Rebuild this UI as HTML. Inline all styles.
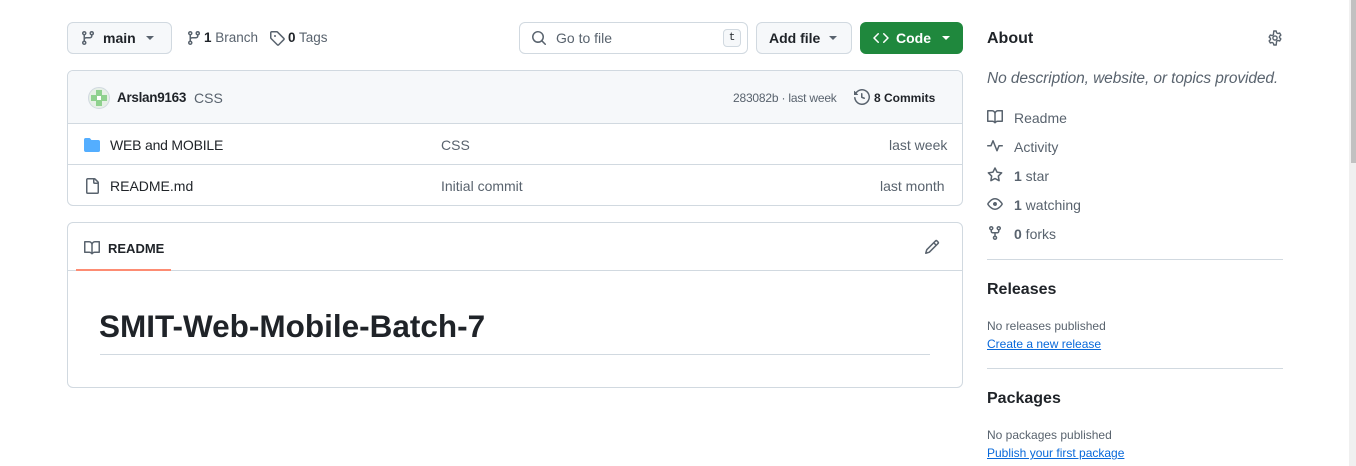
<!DOCTYPE html>
<html><head><meta charset="utf-8"><style>
*{box-sizing:border-box;margin:0;padding:0}
body{width:1356px;height:466px;background:#fff;font-family:"Liberation Sans",sans-serif;color:#1f2328;font-size:14px;position:relative;overflow:hidden}
.a{position:absolute;white-space:nowrap}
.btn{position:absolute;border:1px solid #d1d9e0;border-radius:6px;background:#f6f8fa;height:32px}
svg{display:block}
.g{color:#59636e}
.ic{fill:#59636e}
.lnk{color:#0969da;text-decoration:underline;font-size:12px}
</style></head><body>

<div class="btn" style="left:67px;top:22px;width:105px"></div>
<svg class="a ic" style="left:80px;top:30px" width="16" height="16" viewBox="0 0 16 16"><path d="M9.5 3.25a2.25 2.25 0 1 1 3 2.122V6A2.5 2.5 0 0 1 10 8.5H6a1 1 0 0 0-1 1v1.128a2.251 2.251 0 1 1-1.5 0V5.372a2.25 2.25 0 1 1 1.5 0v1.836A2.49 2.49 0 0 1 6 7h4a1 1 0 0 0 1-1v-.628A2.25 2.25 0 0 1 9.5 3.250Zm-6 0a.75.75 0 1 0 1.5 0 .75.75 0 0 0-1.5 0Zm8.25-.75a.75.75 0 1 0 0 1.5.75.75 0 0 0 0-1.5ZM4.25 12a.75.75 0 1 0 0 1.5.75.75 0 0 0 0-1.5Z"/></svg>
<div class="a" style="left:103px;top:30px;font-weight:bold">main</div>
<div class="a" style="left:146px;top:36px;border:4px solid transparent;border-top:4px solid #59636e"></div>

<svg class="a ic" style="left:186px;top:30px" width="16" height="16" viewBox="0 0 16 16"><path d="M9.5 3.25a2.25 2.25 0 1 1 3 2.122V6A2.5 2.5 0 0 1 10 8.5H6a1 1 0 0 0-1 1v1.128a2.251 2.251 0 1 1-1.5 0V5.372a2.25 2.25 0 1 1 1.5 0v1.836A2.49 2.49 0 0 1 6 7h4a1 1 0 0 0 1-1v-.628A2.25 2.25 0 0 1 9.5 3.250Zm-6 0a.75.75 0 1 0 1.5 0 .75.75 0 0 0-1.5 0Zm8.25-.75a.75.75 0 1 0 0 1.5.75.75 0 0 0 0-1.5ZM4.25 12a.75.75 0 1 0 0 1.5.75.75 0 0 0 0-1.5Z"/></svg>
<div class="a g" style="left:204px;top:30px;font-size:13.5px"><b style="color:#1f2328">1</b> Branch</div>
<svg class="a ic" style="left:269px;top:30px" width="16" height="16" viewBox="0 0 16 16"><path d="M1 7.775V2.750C1 1.784 1.784 1 2.75 1h5.025c.464 0 .91.184 1.238.513l6.25 6.25a1.75 1.75 0 0 1 0 2.474l-5.026 5.026a1.75 1.75 0 0 1-2.474 0l-6.25-6.25A1.752 1.752 0 0 1 1 7.775Zm1.5 0c0 .066.026.13.073.177l6.25 6.25a.25.25 0 0 0 .354 0l5.025-5.025a.25.25 0 0 0 0-.354l-6.25-6.25a.25.25 0 0 0-.177-.073H2.75a.25.25 0 0 0-.25.25ZM6 5a1 1 0 1 1 0 2 1 1 0 0 1 0-2Z"/></svg>
<div class="a g" style="left:288px;top:30px;font-size:13.5px"><b style="color:#1f2328">0</b> Tags</div>

<div class="a" style="left:519px;top:22px;width:229px;height:32px;border:1px solid #d1d9e0;border-radius:6px"></div>
<svg class="a ic" style="left:531px;top:30px" width="16" height="16" viewBox="0 0 16 16"><path d="M10.68 11.74a6 6 0 0 1-7.922-8.982 6 6 0 0 1 8.982 7.922l3.04 3.04a.749.749 0 1 1-1.060 1.06ZM11.5 7a4.499 4.499 0 1 0-8.997 0A4.499 4.499 0 0 0 11.5 7Z"/></svg>
<div class="a g" style="left:556px;top:30px">Go to file</div>
<div class="a" style="left:723px;top:29px;width:18px;height:18px;border:1px solid #d1d9e0;border-radius:4px;background:#f6f8fa;font:11px 'Liberation Mono',monospace;text-align:center;line-height:16px;color:#1f2328">t</div>

<div class="btn" style="left:756px;top:22px;width:96px"></div>
<div class="a" style="left:769px;top:30px;font-weight:bold">Add file</div>
<div class="a" style="left:829px;top:36px;border:4px solid transparent;border-top:4px solid #59636e"></div>

<div class="a" style="left:860px;top:22px;width:103px;height:32px;border-radius:6px;background:#1f883d"></div>
<svg class="a" style="left:873px;top:30px" width="16" height="16" viewBox="0 0 16 16" fill="#fff"><path d="m11.28 3.22 4.25 4.25a.75.75 0 0 1 0 1.06l-4.25 4.25a.749.749 0 0 1-1.06-1.06L13.94 8l-3.72-3.72a.749.749 0 0 1 1.06-1.06Zm-6.56 0a.751.751 0 0 1 1.06 1.06L2.06 8l3.72 3.72a.749.749 0 0 1-1.06 1.06L.47 8.53a.75.75 0 0 1 0-1.06Z"/></svg>
<div class="a" style="left:896px;top:30px;font-weight:bold;color:#fff">Code</div>
<div class="a" style="left:942px;top:36px;border:4px solid transparent;border-top:4px solid #fff"></div>

<div class="a" style="left:67px;top:70px;width:896px;height:136px;border:1px solid #d1d9e0;border-radius:6px;overflow:hidden">
 <div style="height:53px;background:#f6f8fa;border-bottom:1px solid #d1d9e0"></div>
 <div style="height:41px;border-bottom:1px solid #d1d9e0"></div>
</div>
<div class="a" style="left:88px;top:87px;width:22px;height:22px;border-radius:50%;background:#e6f0e6;border:1px solid #d1d9e0;overflow:hidden">
 <div class="a" style="left:7px;top:2px;width:6px;height:16px;background:#8fd18f"></div>
 <div class="a" style="left:2px;top:7px;width:16px;height:6px;background:#8fd18f"></div>
 <div class="a" style="left:8px;top:8px;width:4px;height:4px;background:#fff"></div>
</div>
<div class="a" style="left:117px;top:90px;font-weight:bold;font-size:13.5px;letter-spacing:-0.3px">Arslan9163</div>
<div class="a g" style="left:194px;top:90px">CSS</div>
<div class="a g" style="left:733px;top:91px;font-size:12px;letter-spacing:-0.2px">283082b · last week</div>
<svg class="a ic" style="left:854px;top:89px" width="16" height="16" viewBox="0 0 16 16"><path d="m.427 1.927 1.215 1.215a8.002 8.002 0 1 1-1.6 5.685.75.75 0 1 1 1.493-.154 6.5 6.5 0 1 0 1.18-4.458l1.358 1.358A.25.25 0 0 1 3.896 6H.25A.25.25 0 0 1 0 5.75V2.104a.25.25 0 0 1 .427-.177ZM7.750 4a.75.75 0 0 1 .75.75v2.992l2.028.812a.75.75 0 0 1-.557 1.392l-2.5-1A.751.751 0 0 1 7 8.25v-3.5A.75.75 0 0 1 7.75 4Z"/></svg>
<div class="a" style="left:874px;top:91px;font-size:12px;font-weight:bold">8 Commits</div>

<svg class="a" style="left:84px;top:137px" width="16" height="16" viewBox="0 0 16 16" fill="#54aeff"><path d="M1.75 1A1.75 1.75 0 0 0 0 2.75v10.5C0 14.216.784 15 1.75 15h12.5A1.75 1.75 0 0 0 16 13.25v-8.5A1.75 1.75 0 0 0 14.25 3H7.5a.25.25 0 0 1-.2-.1l-.9-1.2C6.07 1.26 5.55 1 5 1H1.75Z"/></svg>
<div class="a" style="left:110px;top:137px;letter-spacing:-0.2px">WEB and MOBILE</div>
<div class="a g" style="left:441px;top:137px">CSS</div>
<div class="a g" style="left:889px;top:137px">last week</div>

<svg class="a ic" style="left:84px;top:178px" width="16" height="16" viewBox="0 0 16 16"><path d="M2 1.75C2 .784 2.784 0 3.75 0h6.586c.464 0 .909.184 1.237.513l2.914 2.914c.329.328.513.773.513 1.237v9.586A1.75 1.75 0 0 1 13.25 16h-9.5A1.75 1.75 0 0 1 2 14.25Zm1.75-.25a.25.25 0 0 0-.25.25v12.5c0 .138.112.25.25.25h9.5a.25.25 0 0 0 .25-.25V6h-2.75A1.75 1.75 0 0 1 9 4.25V1.5Zm6.75.062V4.25c0 .138.112.25.25.25h2.688l-.011-.013-2.914-2.914-.013-.011Z"/></svg>
<div class="a" style="left:110px;top:178px">README.md</div>
<div class="a g" style="left:441px;top:178px">Initial commit</div>
<div class="a g" style="left:880px;top:178px">last month</div>

<div class="a" style="left:67px;top:222px;width:896px;height:166px;border:1px solid #d1d9e0;border-radius:6px"></div>
<div class="a" style="left:68px;top:270px;width:894px;height:1px;background:#d1d9e0"></div>
<div class="a" style="left:76px;top:269px;width:95px;height:2px;background:#fd8c73"></div>
<svg class="a ic" style="left:84px;top:240px" width="16" height="16" viewBox="0 0 16 16"><path d="M0 1.75A.75.75 0 0 1 .75 1h4.253c1.227 0 2.317.59 3 1.501A3.743 3.743 0 0 1 11.006 1h4.245a.75.75 0 0 1 .75.75v10.5a.75.75 0 0 1-.75.75h-4.507a2.25 2.25 0 0 0-1.591.659l-.622.621a.75.75 0 0 1-1.06 0l-.622-.621A2.25 2.25 0 0 0 5.258 13H.75a.75.75 0 0 1-.75-.75Zm7.251 10.324.004-5.073-.002-2.253A2.25 2.25 0 0 0 5.003 2.5H1.5v9h3.757a3.75 3.75 0 0 1 1.994.574ZM8.755 4.75l-.004 7.322a3.752 3.752 0 0 1 1.992-.572H14.5v-9h-3.495a2.25 2.25 0 0 0-2.25 2.25Z"/></svg>
<div class="a" style="left:108px;top:241px;font-size:13px;font-weight:600">README</div>
<svg class="a ic" style="left:924px;top:239px" width="16" height="16" viewBox="0 0 16 16"><path d="M11.013 1.427a1.75 1.75 0 0 1 2.474 0l1.086 1.086a1.75 1.75 0 0 1 0 2.474l-8.61 8.61c-.21.21-.47.364-.756.445l-3.251.93a.75.75 0 0 1-.927-.928l.929-3.25c.081-.286.235-.547.445-.758l8.61-8.61Zm.176 4.823L9.75 4.81l-6.286 6.287a.253.253 0 0 0-.064.108l-.558 1.953 1.953-.558a.253.253 0 0 0 .108-.064Zm1.238-3.763a.25.25 0 0 0-.354 0L10.811 3.75l1.439 1.44 1.263-1.263a.25.25 0 0 0 0-.354Z"/></svg>
<div class="a" style="left:99px;top:308px;font-size:31.5px;font-weight:600">SMIT-Web-Mobile-Batch-7</div>
<div class="a" style="left:100px;top:354px;width:830px;height:1px;background:#d1d9e0"></div>

<div class="a" style="left:987px;top:30px;font-size:16px;font-weight:bold">About</div>
<svg class="a" style="left:1267px;top:30px" width="16" height="16" viewBox="0 0 16 16" fill="none" stroke="#59636e" stroke-width="1.4" stroke-linejoin="round"><path d="M6.8 1h2.4l.4 1.8 1.3.75 1.75-.55 1.2 2.08-1.35 1.25v1.34l1.35 1.25-1.2 2.08-1.75-.55-1.3.75L9.2 15H6.8l-.4-1.8-1.3-.75-1.75.55-1.2-2.08L3.5 9.67V8.33L2.15 7.08 3.35 5l1.75.55 1.3-.75Z"/><circle cx="8" cy="8" r="2.1"/></svg>
<div class="a g" style="left:987px;top:70px;font-size:15.5px;font-style:italic;letter-spacing:-0.1px">No description, website, or topics provided.</div>

<svg class="a ic" style="left:987px;top:109px" width="16" height="16" viewBox="0 0 16 16"><path d="M0 1.75A.75.75 0 0 1 .75 1h4.253c1.227 0 2.317.59 3 1.501A3.743 3.743 0 0 1 11.006 1h4.245a.75.75 0 0 1 .75.75v10.5a.75.75 0 0 1-.75.75h-4.507a2.25 2.25 0 0 0-1.591.659l-.622.621a.75.75 0 0 1-1.06 0l-.622-.621A2.25 2.25 0 0 0 5.258 13H.75a.75.75 0 0 1-.75-.75Zm7.251 10.324.004-5.073-.002-2.253A2.25 2.25 0 0 0 5.003 2.5H1.5v9h3.757a3.75 3.75 0 0 1 1.994.574ZM8.755 4.75l-.004 7.322a3.752 3.752 0 0 1 1.992-.572H14.5v-9h-3.495a2.25 2.25 0 0 0-2.25 2.25Z"/></svg>
<div class="a g" style="left:1014px;top:110px">Readme</div>
<svg class="a ic" style="left:987px;top:138px" width="16" height="16" viewBox="0 0 16 16"><path d="M6 2c.306 0 .582.187.696.471L10 10.731l1.304-3.26A.751.751 0 0 1 12 7h3.25a.75.75 0 0 1 0 1.5h-2.742l-1.812 4.528a.751.751 0 0 1-1.392 0L6 4.77 4.696 8.03A.75.75 0 0 1 4 8.5H.75a.75.75 0 0 1 0-1.5h2.742l1.812-4.529A.751.751 0 0 1 6 2Z"/></svg>
<div class="a g" style="left:1014px;top:139px">Activity</div>
<svg class="a ic" style="left:987px;top:167px" width="16" height="16" viewBox="0 0 16 16"><path d="M8 .25a.75.75 0 0 1 .673.418l1.882 3.815 4.21.612a.75.75 0 0 1 .416 1.279l-3.046 2.97.719 4.192a.751.751 0 0 1-1.088.791L8 12.347l-3.766 1.98a.75.75 0 0 1-1.088-.79l.72-4.194L.818 6.374a.75.75 0 0 1 .416-1.28l4.21-.611L7.327.668A.75.75 0 0 1 8 .25Zm0 2.445L6.615 5.5a.75.75 0 0 1-.564.41l-3.097.45 2.24 2.184a.75.75 0 0 1 .216.664l-.528 3.084 2.769-1.456a.75.75 0 0 1 .698 0l2.77 1.456-.53-3.084a.75.75 0 0 1 .216-.664l2.24-2.183-3.096-.45a.75.75 0 0 1-.564-.41L8 2.694Z"/></svg>
<div class="a g" style="left:1014px;top:168px"><b style="color:#59636e">1</b> star</div>
<svg class="a ic" style="left:987px;top:196px" width="16" height="16" viewBox="0 0 16 16"><path d="M8 2c1.981 0 3.671.992 4.933 2.078 1.27 1.091 2.187 2.345 2.637 3.023a1.62 1.62 0 0 1 0 1.798c-.45.678-1.367 1.932-2.637 3.023C11.67 13.008 9.981 14 8 14c-1.981 0-3.671-.992-4.933-2.078C1.797 10.83.88 9.576.43 8.898a1.62 1.62 0 0 1 0-1.798c.45-.677 1.367-1.931 2.637-3.022C4.33 2.992 6.019 2 8 2ZM1.679 7.932a.12.12 0 0 0 0 .136c.411.622 1.241 1.75 2.366 2.717C5.176 11.758 6.527 12.5 8 12.5c1.473 0 2.825-.742 3.955-1.715 1.124-.967 1.954-2.096 2.366-2.717a.12.12 0 0 0 0-.136c-.412-.621-1.242-1.75-2.366-2.717C10.824 4.242 9.473 3.5 8 3.5c-1.473 0-2.825.742-3.955 1.715-1.124.967-1.954 2.096-2.366 2.717ZM8 10a2 2 0 1 1-.001-3.999A2 2 0 0 1 8 10Z"/></svg>
<div class="a g" style="left:1014px;top:197px"><b style="color:#59636e">1</b> watching</div>
<svg class="a ic" style="left:987px;top:225px" width="16" height="16" viewBox="0 0 16 16"><path d="M5 5.372v.878c0 .414.336.75.75.75h4.5a.75.75 0 0 0 .75-.75v-.878a2.25 2.25 0 1 1 1.5 0v.878a2.25 2.25 0 0 1-2.25 2.25h-1.5v2.128a2.251 2.251 0 1 1-1.5 0V8.5h-1.5A2.25 2.25 0 0 1 3.5 6.25v-.878a2.25 2.25 0 1 1 1.5 0ZM5 3.25a.75.75 0 1 0-1.5 0 .75.75 0 0 0 1.5 0Zm6.75.75a.75.75 0 1 0 0-1.5.75.75 0 0 0 0 1.5Zm-3 8.75a.75.75 0 1 0-1.5 0 .75.75 0 0 0 1.5 0Z"/></svg>
<div class="a g" style="left:1014px;top:226px"><b style="color:#59636e">0</b> forks</div>

<div class="a" style="left:987px;top:259px;width:296px;height:1px;background:#d1d9e0"></div>
<div class="a" style="left:987px;top:281px;font-size:16px;font-weight:bold">Releases</div>
<div class="a g" style="left:987px;top:319px;font-size:12px">No releases published</div>
<div class="a lnk" style="left:987px;top:337px">Create a new release</div>
<div class="a" style="left:987px;top:368px;width:296px;height:1px;background:#d1d9e0"></div>
<div class="a" style="left:987px;top:390px;font-size:16px;font-weight:bold">Packages</div>
<div class="a g" style="left:987px;top:428px;font-size:12px">No packages published</div>
<div class="a lnk" style="left:987px;top:446px">Publish your first package</div>

<div class="a" style="left:1349px;top:0;width:7px;height:466px;background:#f0f0f0"></div>
<div class="a" style="left:1351px;top:0;width:5px;height:163px;background:#c1c1c1"></div>
</body></html>
